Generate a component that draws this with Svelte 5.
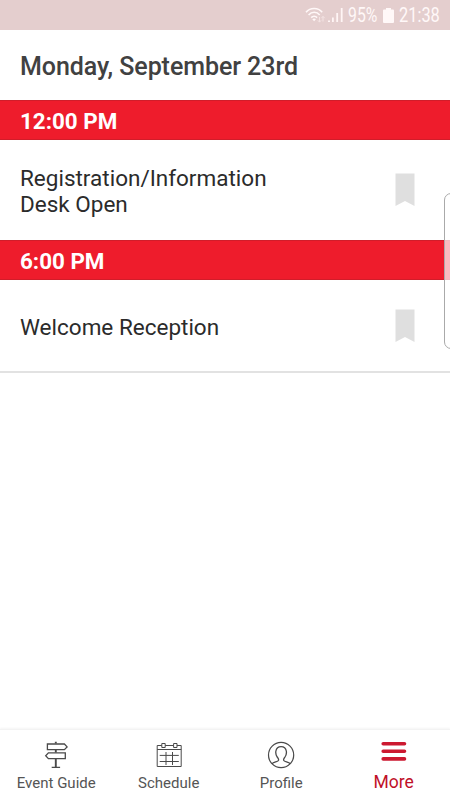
<script lang="ts">
  const day = "Monday, September 23rd";

  const slots: { time: string; lines: string[] }[] = [
    { time: "12:00 PM", lines: ["Registration/Information", "Desk Open"] },
    { time: "6:00 PM", lines: ["Welcome Reception"] },
  ];

  const tabs = [
    { id: "guide", label: "Event Guide" },
    { id: "schedule", label: "Schedule" },
    { id: "profile", label: "Profile" },
    { id: "more", label: "More" },
  ];

  let active = $state("more");
</script>

<div class="screen">
  <div class="status">
    <svg class="wifi" width="21" height="18" viewBox="0 0 21 18" fill="none">
      <path d="M1 6.2C5.3 1.3 13 1.3 17.2 6.2M3.6 9C6.8 5.4 11.7 5.4 14.7 9M6.2 11.6c1.7-1.9 4.2-1.9 5.9 0" stroke="#fff8f8" stroke-width="1.6" />
      <path d="M7.3 13.2c1.1-1 2.6-1 3.6 0l-1.8 2z" fill="#fff8f8" />
      <path d="M14.5 11v5M12.8 14.3l1.7 1.9 1.6-1.9M18 15.5v-5M16.4 12.2l1.6-1.9 1.7 1.9" stroke="#f4e4e4" stroke-width="1" />
    </svg>
    <svg class="signal" width="16" height="15" viewBox="0 0 16 15" fill="#fff5f5">
      <path d="M0 12.5h2V14H0zM4 9.5h1.8V14H4zM8.3 5h1.8v9H8.3zM12.8 0h1.8v14h-1.8z" />
    </svg>
    <span class="battery-level">95%</span>
    <svg class="battery" width="11" height="15" viewBox="0 0 11 15" fill="#fff8f8">
      <path d="M3 0h5v1.5h2q1 0 1 1V14q0 1-1 1H1q-1 0-1-1V2.5q0-1 1-1h2z" />
    </svg>
    <span class="clock">21:38</span>
  </div>

  <h1>{day}</h1>

  <main>
    {#each slots as slot}
      <section>
        <h2>{slot.time}</h2>
        <div class="session">
          <p>
            {#each slot.lines as line}
              <span>{line}</span>
            {/each}
          </p>
          <svg class="bookmark" width="20" height="34" viewBox="0 0 20 34">
            <path d="M.5.5h19v32.5L10 28 .5 33z" />
          </svg>
        </div>
      </section>
    {/each}
  </main>

  <nav>
    {#each tabs as tab}
      <button type="button" class:active={tab.id === active} onclick={() => (active = tab.id)}>
        <svg width="30" height="30" viewBox="0 0 30 30" fill="none">
          {#if tab.id === "guide"}
            <path d="M14.8 1.8v1.8M14.8 9.8v2.7M14.8 19v8" stroke-width="1.9" />
            <path d="M6.4 4h17l2.7 2.9-2.7 2.8h-17zM24.3 12.8H7.4l-2.7 3 2.7 2.8h16.9zM10.7 27.4h8.4" stroke-width="1.3" />
          {:else if tab.id === "schedule"}
            <path d="M7.8 5.5H3.2v21h24v-21h-4.3M19.6 5.5h-8.4M3.2 9.5h24" />
            <path d="M7.8 3.5h3.4v4H7.8zM19.6 3.5H23v4h-3.4z" />
            <path d="M12 12v13M18.5 12v13M5.7 15.4h19.1M5.7 21.5h19.1" />
          {:else if tab.id === "profile"}
            <circle cx="15.1" cy="15" r="12.6" stroke-width="1.2" />
            <path d="M6 23.8c1.3-1.8 6.1-2 6.5-3.4.5-1.4-.5-2.3-1.3-3.4-1.2-1.7-1.7-3.8-1.3-6 .5-2.9 2.4-4.4 5.2-4.4s4.7 1.5 5.2 4.4c.4 2.2-.1 4.3-1.3 6-.8 1.1-1.8 2-1.3 3.4.4 1.4 5.2 1.6 6.5 3.4" stroke-width="1.3" />
          {:else}
            <path d="M4.2 4.7h21.3M4.2 12.3h21.3M4.2 19.9h21.3" stroke-width="3.6" stroke-linecap="round" />
          {/if}
        </svg>
        <span>{tab.label}</span>
      </button>
    {/each}
  </nav>

  <div class="edge-handle"></div>
</div>

<style>
  :global(body) {
    margin: 0;
    background: #fff;
  }

  .screen {
    position: relative;
    display: flex;
    flex-direction: column;
    width: 450px;
    height: 800px;
    overflow: hidden;
    background: #fff;
    color: #2b2b2b;
    font-family: Roboto, "Liberation Sans", sans-serif;
  }

  .status {
    display: flex;
    align-items: center;
    box-sizing: border-box;
    height: 30px;
    padding-left: 305px;
    background: #e4cece;
    color: #fff8f8;
    white-space: nowrap;
  }

  .status svg {
    flex: none;
  }

  .wifi {
    margin-right: 2px;
  }

  .signal {
    margin-right: 4px;
  }

  .battery-level,
  .clock {
    flex: none;
    padding-top: 2px;
    font-size: 19.5px;
    line-height: 28px;
    transform-origin: left center;
  }

  /* the system font is narrower than regular Roboto */
  .battery-level {
    width: 31px;
    transform: scaleX(0.81);
  }

  .clock {
    transform: scaleX(0.84);
  }

  .battery {
    margin: 0 5px 0 4px;
  }

  h1,
  h2,
  p {
    margin: 0;
  }

  h1 {
    box-sizing: border-box;
    height: 70px;
    padding: 2px 20px 0;
    color: #414141;
    font-size: 25px;
    font-weight: 500;
    letter-spacing: -0.07px;
    line-height: 70px;
  }

  main {
    flex: 1;
  }

  h2 {
    box-sizing: border-box;
    height: 40px;
    padding: 1px 20px 0;
    border: solid #d01d2a;
    border-width: 1px 0;
    background: #ee1c2c;
    color: #fff;
    font-size: 22.4px;
    font-weight: 700;
    line-height: 38px;
  }

  .session {
    display: flex;
    align-items: center;
    justify-content: space-between;
    box-sizing: border-box;
    height: 99.5px;
    padding: 2px 35px 0 20px;
  }

  section:last-child .session {
    height: 93px;
    padding-top: 3px;
    border-bottom: 2px solid #e2e2e2;
  }

  p {
    font-size: 22.5px;
    line-height: 26px;
  }

  p span {
    display: block;
  }

  .bookmark {
    margin-top: -2px;
    fill: #dfdfdf;
  }

  section:last-child .bookmark {
    margin-top: -1px;
  }

  nav {
    display: grid;
    grid-template-columns: repeat(4, 1fr);
    height: 70px;
    border-top: 1px solid #f3f3f3;
    box-shadow: 0 -1px 2px #f5f5f5;
  }

  button {
    display: flex;
    flex-direction: column;
    align-items: center;
    padding: 10px 0 0;
    border: 0;
    background: none;
    color: #555;
    font: 15px/26px Roboto, "Liberation Sans", sans-serif;
  }

  button svg {
    stroke: #4a4a4a;
  }

  button.active {
    padding-top: 9px;
    color: #c01028;
    font-size: 17.5px;
  }

  button.active svg {
    stroke: #cc1930;
  }

  /* sits over the list, partly off the right side of the screen */
  .edge-handle {
    position: absolute;
    top: 193px;
    right: -10px;
    box-sizing: border-box;
    width: 16px;
    height: 156px;
    border: 1px solid #aaa;
    border-radius: 7px;
    background: rgba(255, 255, 255, 0.7);
  }
</style>
